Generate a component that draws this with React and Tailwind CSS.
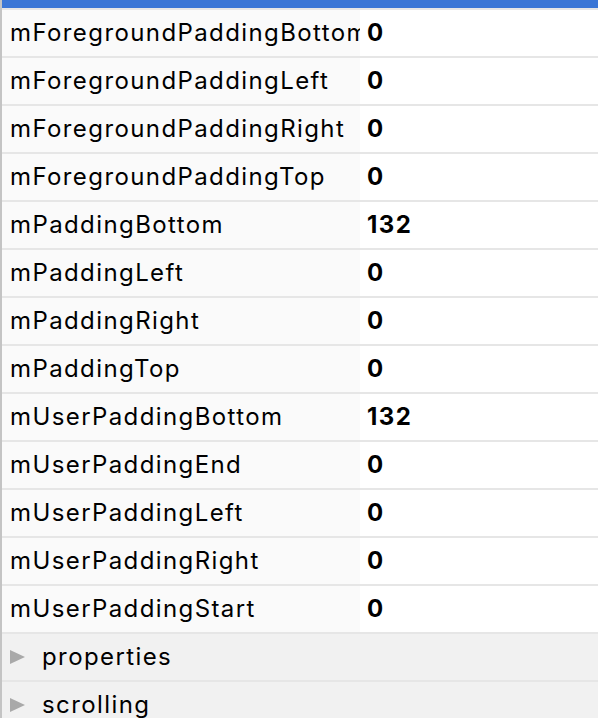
const rows = [
  ["mForegroundPaddingBottom", "0"],
  ["mForegroundPaddingLeft", "0"],
  ["mForegroundPaddingRight", "0"],
  ["mForegroundPaddingTop", "0"],
  ["mPaddingBottom", "132"],
  ["mPaddingLeft", "0"],
  ["mPaddingRight", "0"],
  ["mPaddingTop", "0"],
  ["mUserPaddingBottom", "132"],
  ["mUserPaddingEnd", "0"],
  ["mUserPaddingLeft", "0"],
  ["mUserPaddingRight", "0"],
  ["mUserPaddingStart", "0"],
];

function Triangle() {
  return (
    <svg width="15" height="14" viewBox="0 0 15 14" className="shrink-0">
      <path d="M0 0 L15 7 L0 14 Z" fill="#a9a9a9" />
    </svg>
  );
}

export default function App() {
  return (
    <div
      className="w-[598px] h-[718px] overflow-hidden bg-white border-l-2 border-[#c4c4c4] text-[24px] tracking-[1.4px] text-black"
      style={{ fontFamily: "Inter, 'Open Sans', sans-serif" }}
    >
      <div className="h-2 bg-[#3a76d6]" />
      {rows.map(([name, value]) => (
        <div key={name} className="flex h-12 border-t-2 border-[#e6e6e6]">
          <div className="w-[358px] shrink-0 bg-[#fafafa] pl-2 flex items-center overflow-hidden whitespace-nowrap">
            {name}
          </div>
          <div className="flex-1 pl-[7px] flex items-center font-bold">{value}</div>
        </div>
      ))}
      {["properties", "scrolling"].map((g) => (
        <div key={g} className="flex items-center gap-[17px] h-12 border-t-2 border-[#e6e6e6] bg-[#f1f1f1] pl-2">
          <Triangle />
          <span>{g}</span>
        </div>
      ))}
    </div>
  );
}
